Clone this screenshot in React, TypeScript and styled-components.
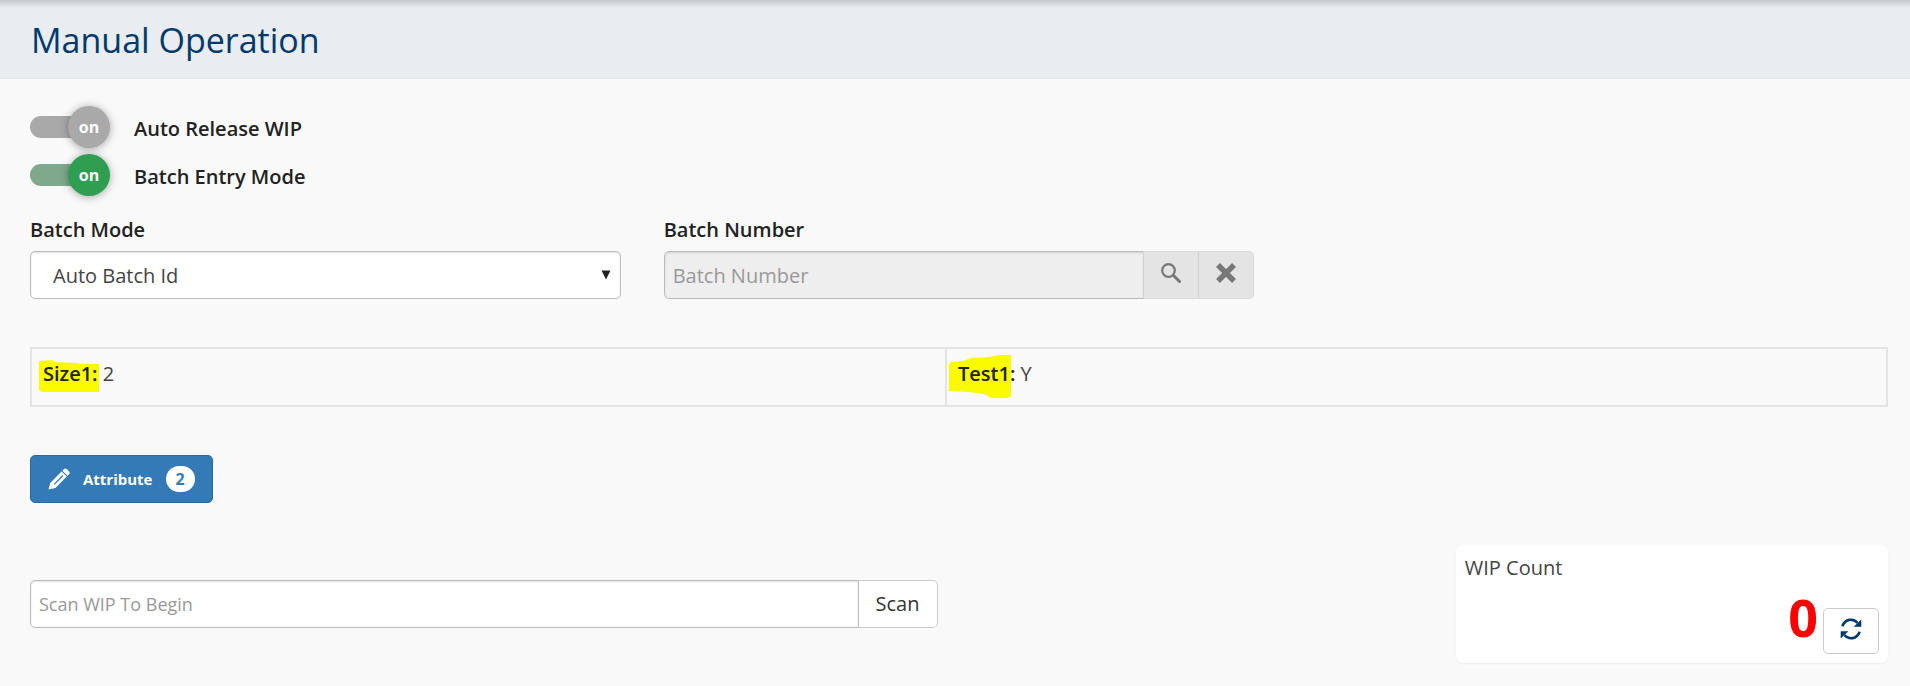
import React from "react";
import styled, { createGlobalStyle, css } from "styled-components";

const GlobalStyle = createGlobalStyle`
  *, *::before, *::after { box-sizing: border-box; }
  body {
    margin: 0;
    background: #f9f9f9;
    color: #333;
    font-family: "Open Sans", sans-serif;
    font-size: 20px;
    line-height: 28px;
  }
  input, select, button { font: inherit; color: inherit; margin: 0; }
  button { cursor: pointer; }
`;

const Header = styled.header`
  padding: 16px 31px 14px;
  background: #e9edf2;
  background-image: linear-gradient(#c5c8cd, #e9edf2 8px);
  border-bottom: 1px solid #dfe4e8;
`;

const Title = styled.h1`
  margin: 0;
  color: #003a6c;
  font-size: 34px;
  line-height: 48px;
  font-weight: 380;
`;

const Main = styled.main`
  padding: 24px 22px 16px 30px;
`;

const Grid = styled.div`
  display: grid;
  grid-template-columns: repeat(12, minmax(0, 1fr));
  column-gap: 43px;
`;

const Cell = styled.div<{ $span: number; $start?: number }>`
  grid-column: ${(p) => p.$start ?? "auto"} / span ${(p) => p.$span};
`;

const SwitchRow = styled.label`
  display: flex;
  align-items: center;
  gap: 24px;
  height: 48px;
  width: fit-content;
  color: #222;
  font-weight: 550;
`;

const SwitchText = styled.span`
  padding-top: 3px;
`;

const SwitchBox = styled.span<{ $track: string; $knob: string }>`
  position: relative;
  display: flex;
  align-items: center;
  width: 80px;
  height: 42px;

  input {
    appearance: none;
    width: 72px;
    height: 22px;
    border-radius: 11px;
    background: ${(p) => p.$track};
  }
  span {
    position: absolute;
    right: 0;
    top: 0;
    width: 42px;
    height: 42px;
    border-radius: 50%;
    background: ${(p) => p.$knob};
    box-shadow: 0 1px 8px rgba(0, 0, 0, 0.35);
    color: #fff;
    font-size: 16px;
    line-height: 42px;
    font-weight: 700;
    text-align: center;
  }
`;

const Fields = styled(Grid)`
  margin-top: 17px;
`;

const FieldLabel = styled.label`
  display: block;
  margin-bottom: 7px;
  color: #222;
  font-weight: 550;
`;

const control = css`
  height: 48px;
  border: 1px solid #bbb;
  border-radius: 5px;
  background: #fff;
  box-shadow: inset 0 1px 2px rgba(0, 0, 0, 0.12);
`;

const SelectWrap = styled.div`
  position: relative;

  svg {
    position: absolute;
    right: 10px;
    top: 19px;
    pointer-events: none;
  }
`;

const Select = styled.select`
  ${control}
  appearance: none;
  width: 100%;
  padding: 2px 22px 0;
  color: #444;
`;

const InputGroup = styled.div`
  display: flex;
`;

const TextInput = styled.input<{ $small?: boolean }>`
  ${control}
  flex: 1;
  min-width: 0;
  padding: 0 8px;
  border-radius: 5px 0 0 5px;
  font-size: ${(p) => (p.$small ? "18px" : "20px")};

  &::placeholder { color: #999; opacity: 1; }
  &:disabled { background: #eee; }
`;

const AddonButton = styled.button<{ $muted?: boolean }>`
  display: flex;
  align-items: center;
  justify-content: center;
  height: 48px;
  padding: 0 17px;
  border: 1px solid ${(p) => (p.$muted ? "#dadada" : "#ccc")};
  border-left: ${(p) => (p.$muted ? "1px solid #d2d2d2" : "0")};
  margin-left: ${(p) => (p.$muted ? "-1px" : "0")};
  background: ${(p) => (p.$muted ? "#e4e4e4" : "#fff")};
  color: ${(p) => (p.$muted ? "#777" : "#333")};

  svg { margin-bottom: 4px; }
  &:last-child { border-radius: 0 5px 5px 0; }
`;

const AttributeTable = styled.table`
  width: 100%;
  margin: 48px 0;
  border-collapse: collapse;
  table-layout: fixed;
  border: 2px solid #e4e4e4;
`;

const AttributeCell = styled.td`
  height: 58px;
  padding: 0 11px 6px;
  border: 2px solid #e4e4e4;
  color: #444;

  &:first-child { width: 49.3%; }
`;

const Marked = styled.span`
  position: relative;
  display: inline-block;
  color: #222;

  svg {
    position: absolute;
    left: -4px;
    top: 0;
  }
  strong { position: relative; font-weight: 550; }
`;

const HighMark = styled(Marked)`
  svg {
    left: -9px;
    top: -5px;
  }
`;

const PrimaryButton = styled.button`
  display: flex;
  align-items: center;
  height: 48px;
  padding: 0 17px;
  border: 1px solid #2a68a5;
  border-radius: 5px;
  background: #337ab7;
  color: #fff;
  font-size: 15px;
  font-weight: 700;
`;

const ButtonText = styled.span`
  margin: 0 13px;
`;

const Badge = styled.span`
  width: 29px;
  border-radius: 13px;
  background: #fff;
  color: #337ab7;
  font-size: 16px;
  line-height: 26px;
`;

const ScanRow = styled(Grid)`
  margin-top: 42px;
`;

const ScanCell = styled(Cell)`
  padding-top: 35px;
`;

const CountCard = styled.section`
  height: 118px;
  padding: 9px;
  border-radius: 7px;
  background: #fff;
  box-shadow: 0 1px 2px rgba(0, 0, 0, 0.06);
  color: #444;
`;

const CardTitle = styled.h2`
  margin: 0;
  font-size: 20px;
  line-height: 28px;
  font-weight: 400;
`;

const CountLine = styled.div`
  display: flex;
  justify-content: flex-end;
  align-items: flex-end;
  gap: 5px;
  height: 72px;
`;

const Count = styled.output`
  color: #f00;
  font-size: 52px;
  line-height: 74px;
  font-weight: 700;
`;

const RefreshButton = styled.button`
  display: flex;
  align-items: center;
  justify-content: center;
  width: 56px;
  height: 46px;
  padding: 0 0 4px;
  border: 1px solid #ccc;
  border-radius: 5px;
  background: #fff;
  color: #003a6c;
`;

const SearchIcon = () => (
  <svg width="20" height="20" viewBox="0 0 20 20" fill="none" stroke="currentColor" aria-hidden="true">
    <circle cx="7.5" cy="7.5" r="6.3" strokeWidth="2.2" />
    <path d="M12.3 12.3l6.2 6.2" strokeWidth="3" strokeLinecap="round" />
  </svg>
);

const ClearIcon = () => (
  <svg width="20" height="20" viewBox="0 0 20 20" fill="none" stroke="currentColor" aria-hidden="true">
    <path d="M2 2l16 16M18 2L2 18" strokeWidth="5.4" />
  </svg>
);

const PencilIcon = () => (
  <svg width="22" height="22" viewBox="0 0 22 22" aria-hidden="true">
    <path fill="currentColor" d="M.5 21.5L2.2 15 13.6 3.4l5.2 5.2L7.4 20zM14.4 2.7L16 1.1q1.4-1.2 2.8 0l2.3 2.3q1.2 1.4 0 2.8L19.5 7.8z" />
    <path fill="none" stroke="#337ab7" strokeWidth="1.3" d="M6.2 16.4L15 7.5" />
  </svg>
);

const RefreshIcon = () => (
  <svg width="22" height="22" viewBox="0 0 22 22" aria-hidden="true">
    <path fill="none" stroke="currentColor" strokeWidth="2.6" d="M2.3 8.3C5.3.6 13 .1 17.6 4.8M19.7 13.7C16.7 21.4 9 21.9 4.4 17.2" />
    <path fill="currentColor" d="M21.3 1.5v7.2h-7.6zM.7 20.5v-7.2h7.6z" />
  </svg>
);

const Switch = ({ label, track, knob, disabled }: { label: string; track: string; knob: string; disabled?: boolean }) => (
  <SwitchRow>
    <SwitchBox $track={track} $knob={knob}>
      <input type="checkbox" role="switch" defaultChecked disabled={disabled} />
      <span aria-hidden="true">on</span>
    </SwitchBox>
    <SwitchText>{label}</SwitchText>
  </SwitchRow>
);

export default function App() {
  return (
    <>
      <GlobalStyle />
      <Header>
        <Title>Manual Operation</Title>
      </Header>
      <Main>
        <Switch label="Auto Release WIP" track="#a9a9a9" knob="#a9a9a9" disabled />
        <Switch label="Batch Entry Mode" track="#80a88c" knob="#2e9e50" />

        <Fields>
          <Cell $span={4}>
            <FieldLabel htmlFor="batch-mode">Batch Mode</FieldLabel>
            <SelectWrap>
              <Select id="batch-mode" defaultValue="auto">
                <option value="auto">Auto Batch Id</option>
              </Select>
              <svg width="10" height="10" viewBox="0 0 10 10" aria-hidden="true">
                <path d="M.5.5h9L5 9.5z" fill="#222" />
              </svg>
            </SelectWrap>
          </Cell>
          <Cell $span={4}>
            <FieldLabel htmlFor="batch-number">Batch Number</FieldLabel>
            <InputGroup>
              <TextInput id="batch-number" placeholder="Batch Number" disabled />
              <AddonButton type="button" aria-label="Search batch" $muted disabled>
                <SearchIcon />
              </AddonButton>
              <AddonButton type="button" aria-label="Clear batch" $muted disabled>
                <ClearIcon />
              </AddonButton>
            </InputGroup>
          </Cell>
        </Fields>

        <AttributeTable>
          <tbody>
            <tr>
              <AttributeCell>
                <Marked>
                  <svg width="60" height="32" viewBox="0 0 60 32" aria-hidden="true">
                    <path fill="#fbfb00" d="M0 1L13 0l2 2 24 1 1 1h20v28l-5 1H17l-2-1H3l-3-2z" />
                  </svg>
                  <strong>Size1:</strong>
                </Marked>{" "}
                2
              </AttributeCell>
              <AttributeCell>
                <HighMark>
                  <svg width="62" height="44" viewBox="0 0 62 44" aria-hidden="true">
                    <path fill="#fbfb00" d="M0 10l2-3 12-1 8-3 18-1 10-2h12v41l-4 2H42l-7-4-15-2-20-1z" />
                  </svg>
                  <strong>Test1:</strong>
                </HighMark>{" "}
                Y
              </AttributeCell>
            </tr>
          </tbody>
        </AttributeTable>

        <PrimaryButton type="button">
          <PencilIcon />
          <ButtonText>Attribute</ButtonText>
          <Badge>2</Badge>
        </PrimaryButton>

        <ScanRow>
          <ScanCell $span={6}>
            <InputGroup>
              <TextInput aria-label="Scan WIP" placeholder="Scan WIP To Begin" $small />
              <AddonButton type="button">Scan</AddonButton>
            </InputGroup>
          </ScanCell>
          <Cell $span={3} $start={10}>
            <CountCard>
              <CardTitle>WIP Count</CardTitle>
              <CountLine>
                <Count>0</Count>
                <RefreshButton type="button" aria-label="Refresh count">
                  <RefreshIcon />
                </RefreshButton>
              </CountLine>
            </CountCard>
          </Cell>
        </ScanRow>
      </Main>
    </>
  );
}
